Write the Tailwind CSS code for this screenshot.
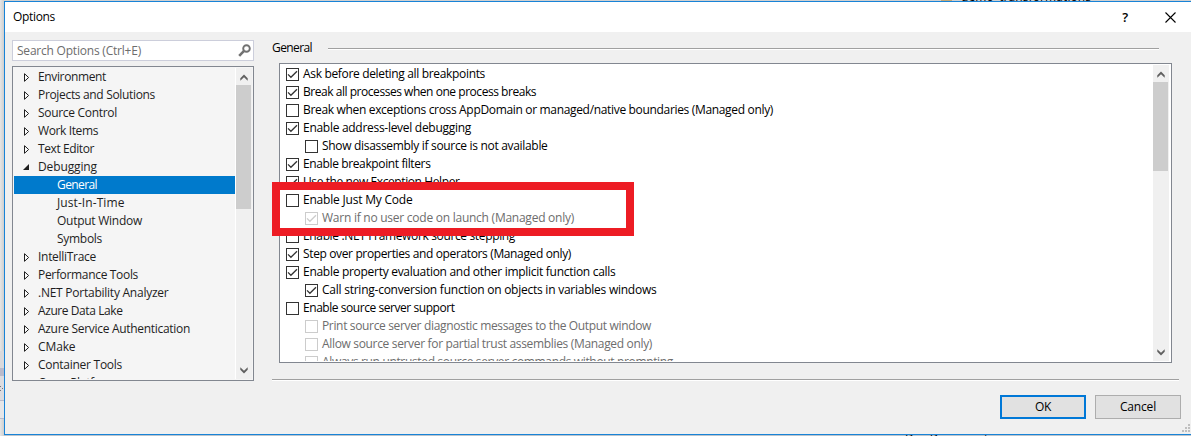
<!DOCTYPE html>
<html lang="en">
<head>
<meta charset="utf-8">
<title>Options</title>
<script src="https://cdn.jsdelivr.net/npm/@tailwindcss/browser@4"></script>
</head>
<body class="w-[1191px] h-[436px] overflow-hidden bg-[#d0d0d0] font-['Open_Sans','Noto_Sans',sans-serif] text-[12px] leading-[18px] tracking-[-0.2px] text-black">
<svg width="0" height="0" class="absolute">
  <symbol id="closed" viewBox="0 0 6 9"><path d="M.5.7V8.3L4.6 4.5Z" fill="#fff" stroke="#1e1e1e"/></symbol>
  <symbol id="open" viewBox="0 0 6 6"><path d="M6 0V6H0Z" fill="#1e1e1e"/></symbol>
  <symbol id="up" viewBox="0 0 8 7"><path d="M.3 4.2L4 .5L7.7 4.2V6.8L4 3.3L.3 6.8Z" fill="#606060"/></symbol>
  <symbol id="down" viewBox="0 0 8 7"><path d="M.3 2.8L4 6.5L7.7 2.8V.2L4 3.7L.3 .2Z" fill="#606060"/></symbol>
  <symbol id="box" viewBox="0 0 13 13"><rect x=".5" y=".5" width="12" height="12" fill="#fff" stroke="currentColor"/></symbol>
  <symbol id="check" viewBox="0 0 13 13"><rect x=".5" y=".5" width="12" height="12" fill="#fff" stroke="currentColor"/><path d="M2 6.4L4.9 9.3L11 3.2" fill="none" stroke="currentColor" stroke-width="1.3"/></symbol>
</svg>
<div class="relative flex h-full w-full">
  <div class="flex w-1 shrink-0 flex-col bg-linear-to-r from-[#e6e6e6] to-[#cfcfcf]">
    <div class="mt-[351px] h-[17px] bg-[#d9d9dc]"></div>
    <div class="h-2 bg-[#b9bacb]"></div>
    <div class="h-6 bg-[#dcdce0] pt-[10px]"><div class="h-px w-px bg-[#77777f]"></div><div class="ml-[2px] mt-px h-px w-px bg-[#77777f]"></div><div class="mt-px h-px w-px bg-[#77777f]"></div></div>
    <div class="h-[19px] border-y border-[#b9bacb] bg-[#e6e6e8]"></div>
  </div>
  <div class="flex min-w-0 flex-1 flex-col">
    <div class="h-px shrink-0 overflow-hidden pl-[937px]"><div class="flex h-px"><span class="h-px w-[11px] bg-[#c2a878]"></span><span class="-mt-[12px] pl-[9px] tracking-[0.1px] whitespace-nowrap">demo_transformations</span></div></div>
    <div class="flex h-[434px] shrink-0 flex-col border-y border-l border-[#1883d7] bg-[#f0f0f0]">
      <header class="flex h-[30px] shrink-0 items-center bg-white pl-2">
        <h1 class="flex-1"><span data-w="42">Options</span></h1>
        <span class="w-[46px] text-center text-[13px] font-semibold">?</span>
        <svg class="ml-[17px] mr-[15px]" width="11" height="11" viewBox="0 0 11 11"><path d="M.5.5L10.5 10.5M10.5.5L.5 10.5" stroke="#000" stroke-width="1.1" fill="none"/></svg>
      </header>
      <main class="flex h-[349px] shrink-0 pl-[7px]">
        <aside class="w-[242px] pt-2">
          <div class="flex h-[21px] items-center justify-between border border-[#ccceDB] bg-white pl-1 pr-[2px] text-[#6d6d6d]">
            <span data-w="124">Search Options (Ctrl+E)</span>
            <svg width="13" height="13" viewBox="0 0 13 13" fill="none" stroke="#717171"><circle cx="8.5" cy="4.5" r="3.3" stroke-width="1.9"/><path d="M5.8 7.2L1.2 11.8" stroke-width="2.6"/></svg>
          </div>
          <div class="mt-[5px] flex h-[315px] border border-[#828790] bg-[#f5f5f5] p-px text-[#1e1e1e]">
            <ul id="tree" class="w-[221px] overflow-hidden"></ul>
            <div class="flex w-[17px] flex-col items-center border-l border-white bg-[#f0f0f0]">
              <svg class="mt-[6px] -ml-px shrink-0" width="8" height="7"><use href="#up"/></svg>
              <div class="mt-[4px] mb-auto h-[124px] w-[15px] self-start bg-[#cdcdcd]"></div>
              <svg class="mb-[5px] -ml-px shrink-0" width="8" height="7"><use href="#down"/></svg>
            </div>
          </div>
        </aside>
        <section class="ml-[18px] flex w-[907px] flex-col pt-[7px]">
          <div class="flex h-[18px] items-center"><h2 class="w-14"><span data-w="40">General</span></h2><div class="mt-[2px] h-[2px] w-[831px] border-t border-[#a0a0a0] bg-white"></div></div>
          <div class="ml-[7px] mt-[6px] flex h-[300px] w-[893px] justify-between border border-[#828790] bg-white p-px">
            <ul id="opts" class="flex-1 overflow-hidden pl-[5px]"></ul>
            <div class="mr-px flex w-4 flex-col items-center bg-[#f0f0f0]">
              <svg class="mt-[6px] -ml-px shrink-0" width="8" height="7"><use href="#up"/></svg>
              <div class="mt-[4px] mb-auto h-[89px] w-[15px] self-start bg-[#cdcdcd]"></div>
              <svg class="mb-[5px] -ml-px shrink-0" width="8" height="7"><use href="#down"/></svg>
            </div>
          </div>
          <div class="mt-auto h-[2px] border-t border-[#a0a0a0] bg-white"></div>
        </section>
      </main>
      <footer class="flex flex-1 justify-end gap-[9px] pr-[10px] pt-[14px]">
        <button class="h-6 w-[86px] border-2 border-[#0078d7] bg-[#e1e1e1] leading-5"><span data-w="16">OK</span></button>
        <button class="h-6 w-[86px] border border-[#adadad] bg-[#e1e1e1] leading-[22px]"><span data-w="36">Cancel</span></button>
      </footer>
    </div>
    <div class="h-px shrink-0 overflow-hidden bg-[#bcc4cc] pl-[901px]"><div class="-mt-[5px] tracking-normal">Doc Document</div></div>
  </div>
  <div class="absolute left-[272px] top-[182px] h-[54px] w-[362px] border-8 border-[#ed1c24]"></div>
  <svg class="absolute left-[1182px] top-[424px]" width="9" height="8" fill="#bfbfbf"><path d="M6 0h2v2h-2zM3 3h2v2h-2zM6 3h2v2h-2zM0 6h2v2h-2zM3 6h2v2h-2zM6 6h2v2h-2z"/></svg>
</div>
<script>
// [label, kind (0 closed, 1 open, 2 child, 3 selected child), label width]
const tree = [["Environment",0,68],["Projects and Solutions",0,117],["Source Control",0,79],["Work Items",0,60],["Text Editor",0,56],["Debugging",1,59],["General",3,40],["Just-In-Time",2,67.5],["Output Window",2,85],["Symbols",2,45],["IntelliTrace",0,58],["Performance Tools",0,100],[".NET Portability Analyzer",0,130.5],["Azure Data Lake",0,84.5],["Azure Service Authentication",0,152],["CMake",0,37.5],["Container Tools",0,84],["Cross Platform",0,78]];
document.getElementById('tree').innerHTML = tree.map(([t,k,w]) => k > 1
  ? `<li class="h-[18px] pl-[43px] whitespace-nowrap ${k===3?'bg-[#007acc] text-white':''}"><span data-w="${w}">${t}</span></li>`
  : `<li class="flex h-[18px] items-center whitespace-nowrap ${k?'pl-[9px]':'pl-[10px]'}"><svg class="shrink-0 ${k?'mr-[9px]':'mr-[8px]'}" width="6" height="${k?6:9}"><use href="#${k?'open':'closed'}"/></svg><span data-w="${w}">${t}</span></li>`).join('');
// [label, label width, checked, indented, disabled]
const opts = [["Ask before deleting all breakpoints",182,1],["Break all processes when one process breaks",233,1],["Break when exceptions cross AppDomain or managed/native boundaries (Managed only)",470,0],["Enable address-level debugging",168,1],["Show disassembly if source is not available",225.5,0,1],["Enable breakpoint filters",127.5,1],["Use the new Exception Helper",156.5,1],["Enable Just My Code",109.5,0],["Warn if no user code on launch (Managed only)",252,1,1,1],["Enable .NET Framework source stepping",212,0],["Step over properties and operators (Managed only)",268,1],["Enable property evaluation and other implicit function calls",312.5,1],["Call string-conversion function on objects in variables windows",334.5,1,1],["Enable source server support",151.5,0],["Print source server diagnostic messages to the Output window",329,0,1,1],["Allow source server for partial trust assemblies (Managed only)",330,0,1,1],["Always run untrusted source server commands without prompting",351,0,1,1]];
document.getElementById('opts').innerHTML = opts.map(([t,w,c,i,d]) => `<li class="flex h-[18px] items-center whitespace-nowrap ${i?'pl-[19px]':''}"><svg class="mr-1 shrink-0 ${d?'text-[#cccccc]':'text-[#333333]'}" width="13" height="13"><use href="#${c?'check':'box'}"/></svg><span class="${d?'text-[#6d6d6d]':''}" data-w="${w}">${t}</span></li>`).join('');
// Tighten or loosen each label to its listed width.
const fit = () => document.querySelectorAll('[data-w]').forEach(e => {
  e.style.letterSpacing = '0px';
  e.style.letterSpacing = ((e.dataset.w - e.getBoundingClientRect().width) / e.textContent.length).toFixed(3) + 'px';
});
addEventListener('load', () => { fit(); document.fonts.ready.then(fit); });
</script>
</body>
</html>
